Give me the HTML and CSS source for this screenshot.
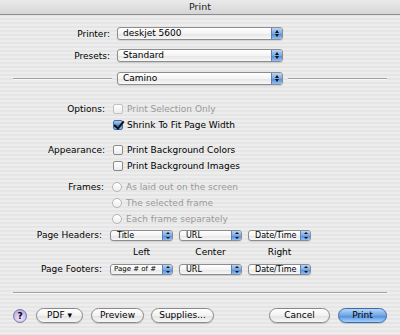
FILE: index.html
```html
<!DOCTYPE html>
<html lang="en">
<head>
    <meta charset="UTF-8">
    <title>Print</title>
    <link rel="stylesheet" href="styles.css">
</head>
<body>
    <div class="window">
        <div class="titlebar">Print</div>

        <!-- Printer and presets -->
        <div class="top">
            <div class="field">
                <span class="label">Printer:</span>
                <div class="popup wide"><span class="value">deskjet 5600</span><span class="arrows"></span></div>
            </div>
            <div class="field">
                <span class="label">Presets:</span>
                <div class="popup wide"><span class="value">Standard</span><span class="arrows"></span></div>
            </div>
        </div>

        <div class="divider">
            <div class="rule"></div>
            <div class="popup wide"><span class="value">Camino</span><span class="arrows"></span></div>
            <div class="rule"></div>
        </div>

        <!-- Camino options -->
        <div class="group options">
            <span class="label">Options:</span>
            <div class="choices">
                <div class="choice disabled"><span class="check"></span>Print Selection Only</div>
                <div class="choice"><span class="check on"></span>Shrink To Fit Page Width</div>
            </div>
        </div>

        <div class="group appearance">
            <span class="label">Appearance:</span>
            <div class="choices">
                <div class="choice"><span class="check"></span>Print Background Colors</div>
                <div class="choice"><span class="check"></span>Print Background Images</div>
            </div>
        </div>

        <div class="group frames">
            <span class="label">Frames:</span>
            <div class="choices">
                <div class="choice disabled"><span class="radio"></span>As laid out on the screen</div>
                <div class="choice disabled"><span class="radio"></span>The selected frame</div>
                <div class="choice disabled"><span class="radio"></span>Each frame separately</div>
            </div>
        </div>

        <div class="headers">
            <span class="label">Page Headers:</span>
            <div class="popup small"><span class="value">Title</span><span class="arrows"></span></div>
            <div class="popup small"><span class="value">URL</span><span class="arrows"></span></div>
            <div class="popup small"><span class="value">Date/Time</span><span class="arrows"></span></div>

            <span></span>
            <span class="col">Left</span>
            <span class="col">Center</span>
            <span class="col">Right</span>

            <span class="label">Page Footers:</span>
            <div class="popup small"><span class="value tiny">Page # of #</span><span class="arrows"></span></div>
            <div class="popup small"><span class="value">URL</span><span class="arrows"></span></div>
            <div class="popup small"><span class="value">Date/Time</span><span class="arrows"></span></div>
        </div>

        <div class="bottom-rule"></div>

        <div class="buttons">
            <span class="help">?</span>
            <span class="btn pdf">PDF &#9662;</span>
            <span class="btn preview">Preview</span>
            <span class="btn supplies">Supplies...</span>
            <span class="spacer"></span>
            <span class="btn cancel">Cancel</span>
            <span class="btn print">Print</span>
        </div>
    </div>
</body>
</html>
```

FILE: styles.css
```css
* {
    margin: 0;
    padding: 0;
    box-sizing: border-box;
}

body {
    width: 400px;
    height: 335px;
    overflow: hidden;
    font-family: 'DejaVu Sans', 'Lucida Grande', sans-serif;
    font-size: 9px;
    color: #000;
}

.window {
    width: 400px;
    height: 335px;
    background: repeating-linear-gradient(to bottom, #ededed 0, #ededed 2px, #e5e5e5 2px, #e5e5e5 4px);
}

.titlebar {
    height: 15px;
    line-height: 14px;
    text-align: center;
    font-size: 9.5px;
    color: #222;
    background: linear-gradient(to bottom, #eaeaea 0%, #d6d6d6 100%);
    border-bottom: 1px solid #8c8c8c;
}

/* Popup menus */
.popup {
    display: flex;
    align-items: stretch;
    height: 13px;
    border: 1px solid #8d8d8d;
    border-radius: 3px;
    background: linear-gradient(to bottom, #ffffff 0%, #f4f4f4 50%, #e4e4e4 51%, #f8f8f8 100%);
    box-shadow: 0 1px 1px rgba(0, 0, 0, 0.12);
    overflow: hidden;
}

.popup .value {
    flex: 1;
    padding-left: 5px;
    line-height: 11px;
    font-size: 9px;
    white-space: nowrap;
}

.popup .arrows {
    width: 11px;
    border-left: 1px solid #5f7fb0;
    background: linear-gradient(to bottom, #b8d3f2 0%, #7aa9e3 50%, #4f8ad6 51%, #8fc0f5 100%);
    position: relative;
}

.popup .arrows::before,
.popup .arrows::after {
    content: "";
    position: absolute;
    left: 3px;
    border-left: 2px solid transparent;
    border-right: 2px solid transparent;
}

.popup .arrows::before {
    top: 2px;
    border-bottom: 3px solid #111;
}

.popup .arrows::after {
    bottom: 2px;
    border-top: 3px solid #111;
}

.popup.wide {
    width: 166px;
}

.popup.small {
    width: 63px;
    height: 11px;
}

.popup.small .value {
    font-size: 8px;
    line-height: 9px;
    padding-left: 6px;
}

.popup.small .value.tiny {
    font-size: 7px;
    padding-left: 3px;
}

.popup.small .arrows {
    width: 10px;
}

.popup.small .arrows::before {
    top: 1px;
    left: 3px;
    border-bottom-width: 2px;
}

.popup.small .arrows::after {
    bottom: 1px;
    left: 3px;
    border-top-width: 2px;
}

/* Top fields */
.top {
    padding-top: 12px;
    display: flex;
    flex-direction: column;
    gap: 9px;
}

.field {
    display: flex;
    align-items: center;
    gap: 7px;
}

.field .label {
    width: 110px;
    text-align: right;
}

.divider {
    display: flex;
    align-items: center;
    margin-top: 10px;
    padding: 0 13px;
    gap: 5px;
}

.divider .rule {
    flex: 1;
    height: 2px;
    border-top: 1px solid #a2a2a2;
    border-bottom: 1px solid #f8f8f8;
}

/* Checkbox and radio groups */
.group {
    display: flex;
    align-items: flex-start;
    gap: 8px;
}

.group .label {
    width: 105px;
    text-align: right;
    line-height: 16px;
}

.options {
    margin-top: 16px;
}

.appearance {
    margin-top: 9px;
}

.frames {
    margin-top: 5px;
}

.frames .label {
    width: 104px;
}

.choice {
    display: flex;
    align-items: center;
    height: 16px;
    gap: 4px;
}

.choice.disabled {
    color: #9a9a9a;
}

.check {
    width: 10px;
    height: 10px;
    border: 1px solid #8a8a8a;
    border-radius: 2px;
    background: linear-gradient(to bottom, #ffffff 0%, #ececec 100%);
    position: relative;
}

.disabled .check {
    border-color: #c2c2c2;
}

.check.on {
    border-color: #4a6ea3;
    background: linear-gradient(to bottom, #a8ccf4 0%, #5b93dc 50%, #3f7fd3 51%, #8dc0f4 100%);
}

.check.on::after {
    content: "";
    position: absolute;
    left: 2px;
    top: -2px;
    width: 4px;
    height: 8px;
    border-right: 2px solid #111;
    border-bottom: 2px solid #111;
    transform: rotate(40deg);
}

.radio {
    width: 10px;
    height: 10px;
    border: 1px solid #b5b5b5;
    border-radius: 50%;
    background: linear-gradient(to bottom, #ffffff 0%, #efefef 100%);
}

/* Headers and footers */
.headers {
    display: grid;
    grid-template-columns: 104px 63px 63px 63px;
    column-gap: 6px;
    row-gap: 3px;
    align-items: center;
    margin-top: 1px;
}

.headers .label {
    text-align: right;
    line-height: 14px;
    padding-right: 2px;
}

.headers .col {
    text-align: center;
    line-height: 14px;
}

.bottom-rule {
    margin: 16px 13px 0;
    height: 2px;
    border-top: 1px solid #a2a2a2;
    border-bottom: 1px solid #f8f8f8;
}

/* Bottom buttons */
.buttons {
    display: flex;
    align-items: center;
    margin-top: 14px;
    padding: 0 13px;
}

.help {
    width: 14px;
    height: 14px;
    border-radius: 50%;
    border: 1px solid #7d7896;
    background: radial-gradient(circle at 50% 70%, #f2e8ff 0%, #c9b8f0 60%, #a996e0 100%);
    text-align: center;
    line-height: 12px;
    font-size: 9px;
    font-weight: bold;
    margin-right: 9px;
}

.btn {
    height: 15px;
    line-height: 13px;
    border: 1px solid #8a8a8a;
    border-radius: 8px;
    background: linear-gradient(to bottom, #ffffff 0%, #f2f2f2 50%, #e2e2e2 51%, #f7f7f7 100%);
    text-align: center;
    font-size: 9px;
    box-shadow: 0 1px 1px rgba(0, 0, 0, 0.15);
}

.pdf {
    width: 47px;
    margin-right: 8px;
}

.preview {
    width: 53px;
    margin-right: 7px;
}

.supplies {
    width: 63px;
}

.spacer {
    flex: 1;
}

.cancel {
    width: 61px;
    margin-right: 8px;
}

.print {
    width: 49px;
    border-color: #3f6aa8;
    background: linear-gradient(to bottom, #b6d6f8 0%, #6fa5e6 50%, #4b8bdc 51%, #a5d3fb 100%);
}
```
